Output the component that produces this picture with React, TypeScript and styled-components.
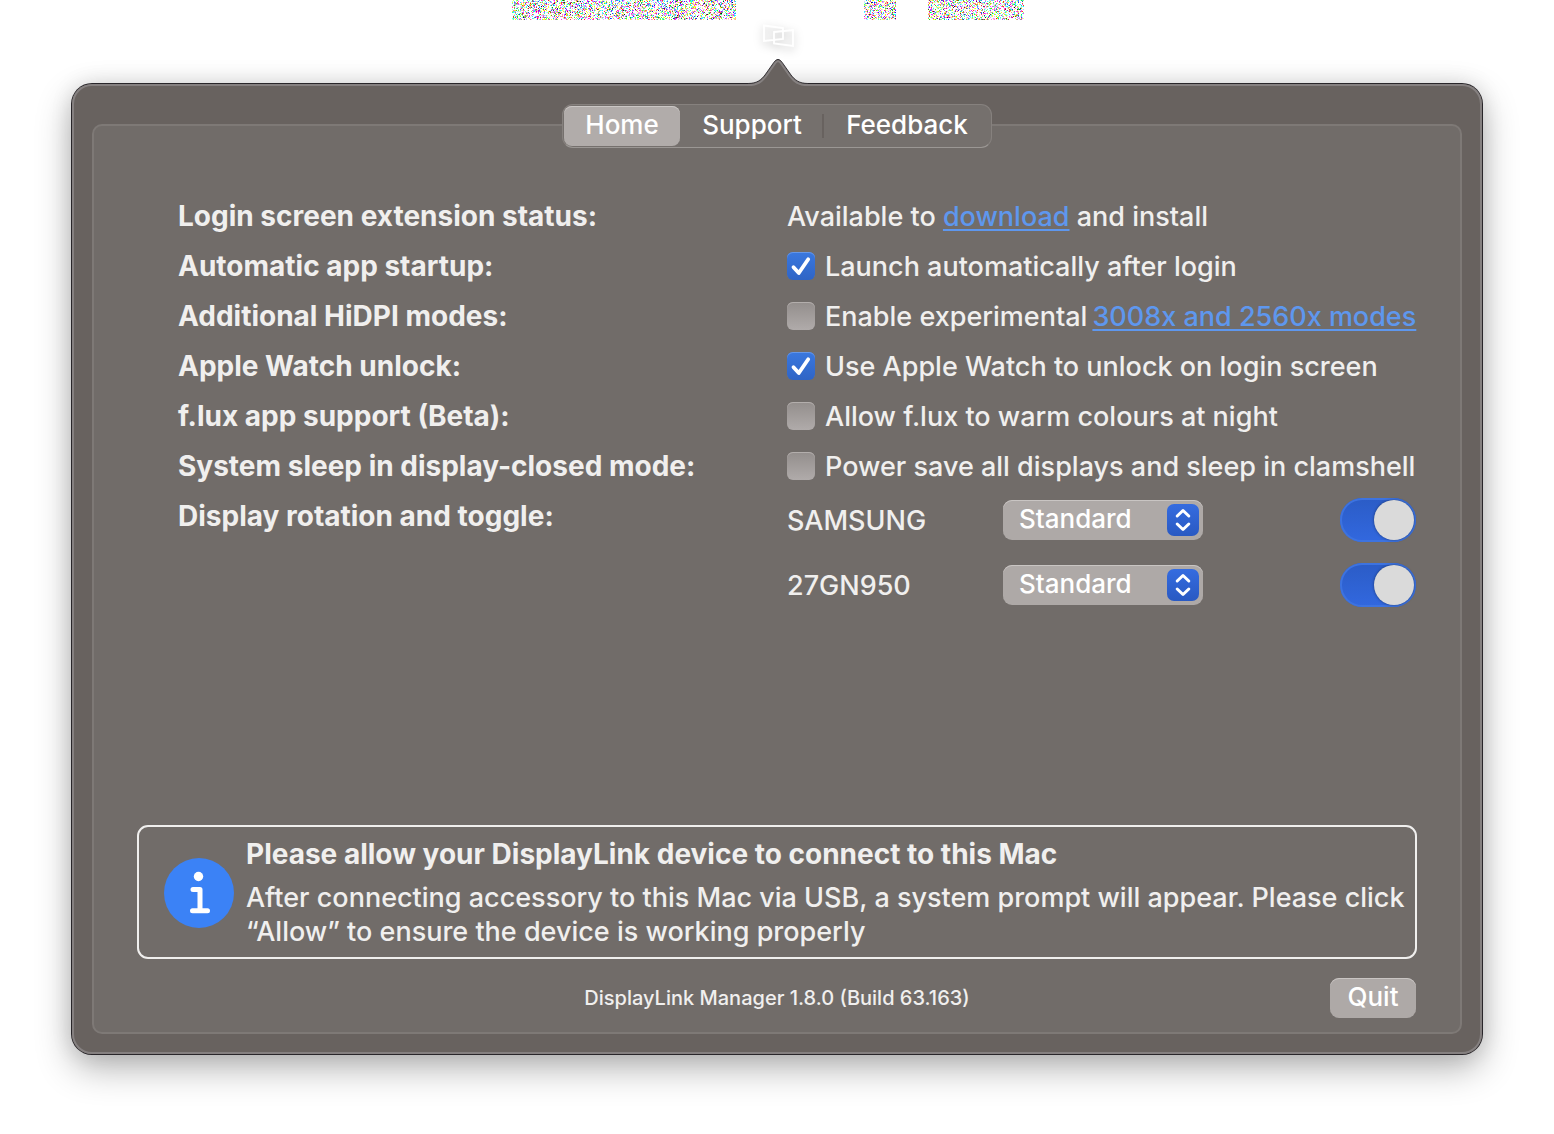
import React, { useEffect, useId, useRef, useState } from 'react';
import styled, { createGlobalStyle } from 'styled-components';

const GlobalStyle = createGlobalStyle`
  *, *::before, *::after { box-sizing: border-box; }
  body { margin: 0; background: #fff; }
  body, button, select, input { font-family: Inter, "Liberation Sans", sans-serif; }
  h2, p { margin: 0; }
`;

const Page = styled.div`
  display: flex;
  flex-direction: column;
  min-height: 100vh;
  padding: 0 72px 80px;
`;

const MenuBar = styled.header`
  display: flex;
  flex-direction: column;
  align-items: center;
  height: 84px;
`;

const NoiseStrip = styled.div`
  display: flex;
  justify-content: space-between;
  width: 530px;
  height: 20px;
  padding-right: 18px;
`;

const Noise = styled.canvas`
  display: block;
  &:nth-child(2) { margin-left: 96px; }
`;

const TrayIcon = styled.svg`
  display: block;
  margin-top: 4px;
  margin-left: 4px;
  filter: drop-shadow(0 3px 4px rgba(0, 0, 0, 0.25));
`;

const Popover = styled.main`
  position: relative;
  flex: 1;
  display: flex;
  flex-direction: column;
  align-items: center;
  padding: 20px;
  border-radius: 20px;
  background: #68625f;
  box-shadow: inset 0 0 0 2px #858080, 0 0 0 1px #29262a,
    0 14px 36px rgba(0, 0, 0, 0.3), 0 0 22px rgba(0, 0, 0, 0.12);
`;

const Arrow = styled.svg`
  position: absolute;
  top: -27px;
  left: 50%;
  margin-left: -30px;
`;

const Tabs = styled.nav`
  position: relative;
  display: grid;
  grid-template-columns: 116px 144px 166px;
  height: 44px;
  padding: 1px;
  border: 1px solid #86817e;
  border-bottom-color: #9b9794;
  border-radius: 11px;
  background: #75706d;
`;

const Tab = styled.button<{ $active?: boolean; $divided?: boolean }>`
  position: relative;
  border: 0;
  border-radius: 8px;
  padding: 0 0 4px;
  background: ${(p) => (p.$active ? '#b1acaa' : 'transparent')};
  box-shadow: ${(p) => (p.$active ? 'inset 0 1px 0 #cbc7c5' : 'none')};
  color: #fff;
  font-size: 26px;
  font-weight: 500;
  &::after {
    content: '';
    display: ${(p) => (p.$divided ? 'block' : 'none')};
    position: absolute;
    right: 0;
    top: 8px;
    bottom: 8px;
    width: 2px;
    background: #68625f;
  }
`;

const Group = styled.section`
  align-self: stretch;
  flex: 1;
  display: flex;
  flex-direction: column;
  margin-top: -24px;
  padding: 66px 43px 14px;
  border: 2px solid #7e7976;
  border-radius: 10px;
  background: #716c69;
`;

const Settings = styled.div`
  display: grid;
  grid-template-columns: 609px minmax(0, 1fr);
  padding: 0 1px 0 41px;
  color: #f0efee;
  font-size: 27px;
  font-weight: 450;
  line-height: 50px;
  white-space: nowrap;
`;

const SettingName = styled.div`
  font-size: 28px;
  font-weight: 700;
  line-height: 48px;
`;

const SettingValue = styled.div`
  display: flex;
  align-items: center;
  a { margin-left: 5px; }
`;

const Link = styled.a`
  color: #5e97ee;
  text-decoration: underline;
  text-decoration-thickness: 2px;
  text-underline-offset: 3px;
`;

const TickBox = styled.span`
  display: grid;
  margin-right: 10px;
  padding-bottom: 2px;
  svg, input { grid-area: 1 / 1; }
  svg { pointer-events: none; visibility: hidden; }
  input:checked + svg { visibility: visible; }
`;

const TickInput = styled.input`
  appearance: none;
  width: 28px;
  height: 28px;
  margin: 0;
  border-radius: 6px;
  background: linear-gradient(#938e8c, #b0abaa);
  box-shadow: inset 0 1px 0 #b3aeac;
  &:checked {
    background: linear-gradient(#3a78df, #2f64c5);
    box-shadow: inset 0 1px 0 #6496e8;
  }
`;

const Displays = styled.div`
  display: grid;
  row-gap: 15px;
  padding-top: 4px;
`;

const DisplayRow = styled.div`
  display: grid;
  grid-template-columns: 216px 200px 1fr;
  align-items: center;
`;

const SelectBox = styled.div`
  display: grid;
  align-items: center;
  padding-bottom: 2px;
  select, svg { grid-area: 1 / 1; }
  svg { justify-self: end; margin-right: 4px; pointer-events: none; }
`;

const Select = styled.select`
  appearance: none;
  width: 100%;
  height: 40px;
  padding: 0 40px 3px 16px;
  border: 0;
  border-radius: 9px;
  background: #aea9a7;
  box-shadow: inset 0 1px 0 #c9c5c3;
  color: #fff;
  font-size: 26px;
  font-weight: 500;
`;

const Switch = styled.input`
  appearance: none;
  justify-self: end;
  display: flex;
  align-items: center;
  width: 76px;
  height: 44px;
  margin: 0 0 2px;
  padding: 2px;
  border-radius: 22px;
  background: #8f8a88;
  &:checked {
    justify-content: flex-end;
    background: linear-gradient(#2b5cc6, #3268df);
    box-shadow: inset 0 0 0 2px #3d73e0;
  }
  &::before {
    content: '';
    width: 40px;
    height: 40px;
    border-radius: 50%;
    background: #dadada;
    box-shadow: 0 0 3px rgba(0, 0, 0, 0.45);
  }
`;

const Notice = styled.aside`
  display: flex;
  align-items: center;
  margin-top: auto;
  padding: 10px 8px 8px 25px;
  border: 2px solid #f0efee;
  border-radius: 11px;
  color: #f0efee;
  font-size: 27px;
  font-weight: 450;
  line-height: 34px;
  svg { flex-shrink: 0; }
`;

const NoticeText = styled.div`
  margin-left: 12px;
  h2 { margin-bottom: 10px; font-size: 28px; font-weight: 700; }
`;

const Footer = styled.footer`
  display: grid;
  grid-template-columns: 1fr auto 1fr;
  align-items: center;
  margin-top: 19px;
  color: #f0efee;
  font-size: 20px;
  font-weight: 500;
`;

const QuitButton = styled.button`
  grid-column: 3;
  justify-self: end;
  width: 86px;
  height: 40px;
  margin-right: 1px;
  padding: 0 0 3px;
  border: 0;
  border-radius: 9px;
  background: #aea9a7;
  box-shadow: inset 0 1px 0 #c9c5c3;
  color: #fff;
  font-size: 26px;
  font-weight: 500;
`;

const Version = styled.p`
  grid-column: 2;
`;

function NoiseBlock({ width, seed }: { width: number; seed: number }) {
  const ref = useRef<HTMLCanvasElement>(null);
  useEffect(() => {
    const ctx = ref.current!.getContext('2d')!;
    const image = ctx.createImageData(width, 20);
    let state = seed;
    const next = () => {
      state = (Math.imul(state, 1664525) + 1013904223) >>> 0;
      return state / 4294967296;
    };
    for (let i = 0; i < image.data.length; i += 4) {
      const blank = next() < 0.35;
      for (let c = 0; c < 3; c++) {
        image.data[i + c] = blank || next() < 0.5 ? 255 : Math.floor(next() * 256);
      }
      image.data[i + 3] = 255;
    }
    ctx.putImageData(image, 0, 0);
  }, [width, seed]);
  return <Noise ref={ref} width={width} height={20} aria-hidden="true" />;
}

function Check({ label, initial, children }: { label: string; initial?: boolean; children?: React.ReactNode }) {
  const id = useId();
  const [on, setOn] = useState(!!initial);
  return (
    <SettingValue>
      <TickBox>
        <TickInput id={id} type="checkbox" checked={on} onChange={() => setOn(!on)} />
        <svg width="28" height="28" viewBox="0 0 28 28" fill="none" stroke="#fff" strokeWidth="3.8" strokeLinecap="round" strokeLinejoin="round">
          <path d="M6.500 15.200 11.800 21 21.200 7.200" />
        </svg>
      </TickBox>
      <label htmlFor={id}>{label}</label>
      {children}
    </SettingValue>
  );
}

function Display({ name }: { name: string }) {
  const id = useId();
  const [on, setOn] = useState(true);
  return (
    <DisplayRow>
      <label htmlFor={id}>{name}</label>
      <SelectBox>
        <Select id={id} defaultValue="Standard">
          <option>Standard</option>
        </Select>
        <svg width="32" height="32" viewBox="0 0 32 32" fill="none">
          <defs>
            <linearGradient id={`${id}-fill`} x2="0" y2="1">
              <stop stopColor="#356ce0" />
              <stop offset="1" stopColor="#2959c2" />
            </linearGradient>
          </defs>
          <rect width="32" height="32" rx="7" fill={`url(#${id}-fill)`} />
          <path d="m10.200 12 5.800-5.500 5.800 5.500M10.200 20l5.800 5.500 5.800-5.500" stroke="#fff" strokeWidth="3" strokeLinecap="round" strokeLinejoin="round" />
        </svg>
      </SelectBox>
      <Switch type="checkbox" role="switch" aria-label={`${name} enabled`} checked={on} onChange={() => setOn(!on)} />
    </DisplayRow>
  );
}

export default function App() {
  return (
    <>
      <GlobalStyle />
      <Page>
        <MenuBar>
          <NoiseStrip>
            <NoiseBlock width={224} seed={7} />
            <NoiseBlock width={32} seed={91} />
            <NoiseBlock width={96} seed={523} />
          </NoiseStrip>
          <TrayIcon width="34" height="24" viewBox="0 0 34 24" fill="none" stroke="#fff" strokeWidth="1.8">
            <path d="M2 1.500 21 4v11L2 17ZM12 8l19-2v16l-19-2.500Z" />
          </TrayIcon>
        </MenuBar>
        <Popover>
          <Arrow width="62" height="30" viewBox="0 0 62 30" aria-hidden="true">
            <path d="M1 30V26.500C10 26.500 14 23 18 18L27 5.500Q31 -.5 35 5.500L44 18C48 23 52 26.500 61 26.500V30Z" fill="#68625f" />
            <path d="M1 28C11 28 15 24.500 19.200 19L28.300 6Q31 2.500 33.700 6L42.800 19C47 24.500 51 28 61 28" fill="none" stroke="#858080" strokeWidth="2" />
            <path d="M1 26.500C10 26.500 14 23 18 18L27 5.200Q31 -.5 35 5.200L44 18C48 23 52 26.500 61 26.500" fill="none" stroke="#39363a" />
          </Arrow>
          <Tabs>
            <Tab $active>Home</Tab>
            <Tab $divided>Support</Tab>
            <Tab>Feedback</Tab>
          </Tabs>
          <Group>
            <Settings>
              <SettingName>Login screen extension status:</SettingName>
              <div>
                Available to <Link href="#download">download</Link> and install
              </div>
              <SettingName>Automatic app startup:</SettingName>
              <Check label="Launch automatically after login" initial />
              <SettingName>Additional HiDPI modes:</SettingName>
              <Check label="Enable experimental">
                <Link href="#modes">3008x and 2560x modes</Link>
              </Check>
              <SettingName>Apple Watch unlock:</SettingName>
              <Check label="Use Apple Watch to unlock on login screen" initial />
              <SettingName>f.lux app support (Beta):</SettingName>
              <Check label="Allow f.lux to warm colours at night" />
              <SettingName>System sleep in display-closed mode:</SettingName>
              <Check label="Power save all displays and sleep in clamshell" />
              <SettingName>Display rotation and toggle:</SettingName>
              <Displays>
                <Display name="SAMSUNG" />
                <Display name="27GN950" />
              </Displays>
            </Settings>
            <Notice>
              <svg width="70" height="70" viewBox="0 0 70 70" fill="none" aria-hidden="true">
                <circle cx="35" cy="35" r="35" fill="#3b82f6" />
                <circle cx="34.500" cy="18.500" r="4.700" fill="#fff" />
                <path d="M29 31.500h7v21M28.500 52.700h15" stroke="#fff" strokeWidth="5" strokeLinecap="round" strokeLinejoin="round" />
              </svg>
              <NoticeText>
                <h2>Please allow your DisplayLink device to connect to this Mac</h2>
                <p>After connecting accessory to this Mac via USB, a system prompt will appear. Please click “Allow” to ensure the device is working properly</p>
              </NoticeText>
            </Notice>
            <Footer>
              <Version>DisplayLink Manager 1.8.0 (Build 63.163)</Version>
              <QuitButton>Quit</QuitButton>
            </Footer>
          </Group>
        </Popover>
      </Page>
    </>
  );
}
